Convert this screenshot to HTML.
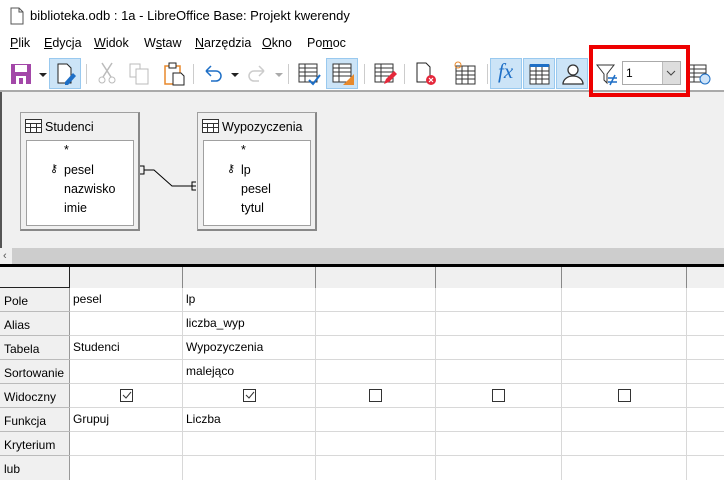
<!DOCTYPE html>
<html><head><meta charset="utf-8"><style>
*{margin:0;padding:0;box-sizing:border-box}
body{width:724px;height:480px;overflow:hidden;background:#fff;font-family:"Liberation Sans",sans-serif;font-size:12px;color:#000;position:relative}
.a{position:absolute}
.menu span{position:absolute;top:36px;font-size:12.5px}
.btn{position:absolute;top:58px;width:32px;height:31px}
.hl{background:#cce4f7;border:1px solid #99c9ef}
.sep{position:absolute;top:64px;width:1px;height:20px;background:#ccc}
.tb{position:absolute;background:#f0f0f0;border:1px solid #a0a0a0;border-right:2px solid #888;border-bottom:2px solid #888}
.tb .hd{position:absolute;left:24px;top:7px;font-size:12.5px}
.tb .ls{position:absolute;left:5px;top:27px;right:4px;bottom:3px;background:#fff;border:1px solid #a0a0a0}
.ls div{position:absolute;left:37px;font-size:12.5px}
.grid .c{position:absolute;font-size:12px}
</style></head><body>
<!-- title -->
<svg class="a" style="left:10px;top:7px" width="14" height="18"><path d="M1 1h8l4 4v12H1z M9 1v4h4" fill="#fff" stroke="#555"/></svg>
<div class="a" style="left:30px;top:8px;font-size:13px">biblioteka.odb : 1a - LibreOffice Base: Projekt kwerendy</div>
<div class="menu">
<span style="left:10px"><u>P</u>lik</span><span style="left:44px"><u>E</u>dycja</span><span style="left:94px"><u>W</u>idok</span><span style="left:144px">W<u>s</u>taw</span><span style="left:195px"><u>N</u>arzędzia</span><span style="left:262px"><u>O</u>kno</span><span style="left:307px">Po<u>m</u>oc</span>
</div>
<!-- toolbar -->
<svg class="a" style="left:10px;top:63px" width="22" height="22"><rect x="1" y="1" width="20" height="20" fill="#a347a8"/><rect x="5" y="2" width="12" height="7" fill="#fff"/><rect x="6" y="13" width="10" height="8" fill="#fff"/><rect x="9" y="15" width="4" height="6" fill="#a347a8"/></svg>
<div class="a" style="left:39px;top:73px;border:4px solid transparent;border-top:4px solid #222"></div>
<div class="btn hl" style="left:49px"></div>
<svg class="a" style="left:56px;top:63px" width="22" height="22"><path d="M2 1h9l4 4v15H2z" fill="#fff" stroke="#222"/><path d="M9 19l8-9 3 3-8 9h-3z" fill="#1e6fc6"/></svg>
<div class="sep" style="left:86px"></div>
<svg class="a" style="left:97px;top:62px" width="20" height="22"><path d="M5 1l9 14M15 1L6 15" stroke="#bbb" stroke-width="1.5" fill="none"/><circle cx="5" cy="18" r="3" fill="none" stroke="#bbb"/><circle cx="15" cy="18" r="3" fill="none" stroke="#bbb"/></svg>
<svg class="a" style="left:129px;top:63px" width="22" height="22"><rect x="1" y="1" width="10" height="13" fill="#fff" stroke="#bbb"/><rect x="7" y="6" width="12" height="15" fill="#fff" stroke="#bbb"/></svg>
<svg class="a" style="left:164px;top:62px" width="22" height="24"><rect x="1" y="4" width="15" height="18" fill="#fff" stroke="#e8892b" stroke-width="1.5"/><rect x="5" y="1" width="7" height="5" fill="#fff" stroke="#222"/><path d="M9 11h8l3 3v9H9z" fill="#fff" stroke="#222"/></svg>
<div class="sep" style="left:193px"></div>
<svg class="a" style="left:202px;top:64px" width="22" height="20"><path d="M4 7h10a5 5 0 010 10H9M4 7l5-5M4 7l5 5" fill="none" stroke="#1e6fc6" stroke-width="1.5"/></svg>
<div class="a" style="left:231px;top:73px;border:4px solid transparent;border-top:4px solid #222"></div>
<svg class="a" style="left:246px;top:64px" width="22" height="20"><path d="M18 7H8a5 5 0 000 10h5M18 7l-5-5M18 7l-5 5" fill="none" stroke="#ccc" stroke-width="1.5"/></svg>
<div class="a" style="left:275px;top:73px;border:4px solid transparent;border-top:4px solid #aaa"></div>
<div class="sep" style="left:288px"></div>
<svg class="a" style="left:298px;top:62px" width="24" height="24"><rect x="1" y="2" width="18" height="18" fill="#fff" stroke="#333"/><path d="M1 6h18M1 10h18M1 14h18M7 2v18" stroke="#333"/><path d="M11 18l4 4 7-9" stroke="#1e6fc6" stroke-width="2" fill="none"/></svg>
<div class="btn hl" style="left:326px"></div>
<svg class="a" style="left:332px;top:62px" width="24" height="24"><rect x="1" y="2" width="18" height="18" fill="#fff" stroke="#333"/><path d="M1 6h18M1 10h18M1 14h18M7 2v18" stroke="#333"/><path d="M22 12v11h-11z" fill="#e8892b"/></svg>
<div class="sep" style="left:364px"></div>
<svg class="a" style="left:374px;top:62px" width="24" height="24"><rect x="1" y="2" width="18" height="18" fill="#fff" stroke="#333"/><path d="M1 6h18M1 10h18M1 14h18M7 2v18" stroke="#333"/><path d="M10 22l2-5 8-8 3 3-8 8z" fill="#e5283b"/></svg>
<div class="sep" style="left:404px"></div>
<svg class="a" style="left:415px;top:62px" width="24" height="24"><path d="M2 1h9l4 4v15H2z" fill="#fff" stroke="#222"/><circle cx="16" cy="18" r="5" fill="#e5283b"/><path d="M14 16l4 4M18 16l-4 4" stroke="#fff" stroke-width="1.2"/></svg>
<svg class="a" style="left:453px;top:60px" width="24" height="26"><rect x="3" y="6" width="19" height="18" fill="#fff" stroke="#333"/><path d="M3 11h19M3 15h19M3 19h19M9 6v18M15 6v18" stroke="#333"/><circle cx="5" cy="5" r="3" fill="none" stroke="#e8892b"/></svg>
<div class="sep" style="left:487px"></div>
<div class="btn hl" style="left:490px"></div>
<div class="a" style="left:498px;top:59px;font-family:'Liberation Serif',serif;font-style:italic;font-size:21px;color:#1e6fc6">fx</div>
<div class="btn hl" style="left:523px"></div>
<svg class="a" style="left:528px;top:62px" width="24" height="24"><rect x="2" y="3" width="19" height="19" fill="#fff" stroke="#333"/><rect x="2" y="2" width="19" height="3" fill="#1e6fc6"/><path d="M2 9h19M2 13h19M2 17h19M8 5v17M14 5v17" stroke="#333"/></svg>
<div class="btn hl" style="left:556px"></div>
<svg class="a" style="left:561px;top:62px" width="24" height="24"><circle cx="12" cy="8" r="5" fill="#fff" stroke="#333" stroke-width="1.3"/><path d="M2 22a10 8 0 0120 0z" fill="#fff" stroke="#333" stroke-width="1.3"/></svg>
<svg class="a" style="left:596px;top:62px" width="24" height="24"><path d="M1 3h17l-7 9v9l-3-3v-6z" fill="#fff" stroke="#333"/><path d="M12 16h9M12 20h9M19 13l-5 10" stroke="#1e6fc6" stroke-width="1.5"/></svg>
<div class="a" style="left:622px;top:61px;width:59px;height:24px;border:1px solid #aaa;background:#fff"></div>
<div class="a" style="left:626px;top:66px;font-size:12px">1</div>
<div class="a" style="left:662px;top:62px;width:18px;height:22px;background:#ddd;border-left:1px solid #bbb"></div>
<svg class="a" style="left:666px;top:70px" width="10" height="6"><path d="M1 1l4 4 4-4" stroke="#444" fill="none"/></svg>
<svg class="a" style="left:688px;top:62px" width="24" height="24"><rect x="1" y="3" width="17" height="17" fill="#fff" stroke="#333"/><path d="M1 7h17M1 11h17M1 15h17M6 3v17" stroke="#333"/><circle cx="17" cy="17" r="5" fill="#cfe4f9" stroke="#1e6fc6"/></svg>
<div class="a" style="left:0;top:90px;width:724px;height:2px;background:#aaa"></div>
<!-- design area -->
<div class="a" style="left:0;top:92px;width:724px;height:156px;background:#f0f0f0;border-left:2px solid #555"></div>
<div class="tb" style="left:20px;top:112px;width:120px;height:119px">
<svg class="a" style="left:4px;top:6px" width="17" height="14"><rect x="0.5" y="0.5" width="16" height="13" fill="#fff" stroke="#333"/><path d="M0 4.5h17M0 8.5h17M5.5 4v10M11.5 4v10" stroke="#333"/></svg>
<div class="hd">Studenci</div>
<div class="ls"><div style="top:2px">*</div><div style="top:22px">pesel</div><div style="top:41px">nazwisko</div><div style="top:60px">imie</div><div style="left:23px;top:21px;font-size:11px">⚷</div></div>
</div>
<div class="tb" style="left:197px;top:112px;width:120px;height:119px">
<svg class="a" style="left:4px;top:6px" width="17" height="14"><rect x="0.5" y="0.5" width="16" height="13" fill="#fff" stroke="#333"/><path d="M0 4.5h17M0 8.5h17M5.5 4v10M11.5 4v10" stroke="#333"/></svg>
<div class="hd">Wypozyczenia</div>
<div class="ls"><div style="top:2px">*</div><div style="top:22px">lp</div><div style="top:41px">pesel</div><div style="top:60px">tytul</div><div style="left:23px;top:21px;font-size:11px">⚷</div></div>
</div>
<svg class="a" style="left:138px;top:164px" width="62" height="30"><path d="M2 2h4v8h-4M6 6h10l18 16h18M58 18h-4v8h4" fill="none" stroke="#000"/><path d="M52 22h6" stroke="#000"/></svg>
<!-- red highlight -->
<div class="a" style="left:589px;top:45px;width:101px;height:52px;border:4px solid #ee0000"></div>
<!-- scrollbar -->
<div class="a" style="left:0;top:248px;width:724px;height:16px;background:#cdcdcd"></div>
<div class="a" style="left:0;top:248px;width:12px;height:16px;background:#f0f0f0;font-size:11px;color:#555;padding-left:3px;line-height:16px">‹</div>
<div class="a" style="left:0;top:264px;width:724px;height:3px;background:#000"></div>
<!-- grid -->
<div class="grid">
<div class="a" style="left:0;top:267px;width:724px;height:21px;background:#f0f0f0"></div>
<div class="a" style="left:0;top:267px;width:70px;height:213px;background:#f0f0f0;border-right:1px solid #999"></div>
<div class="a" style="left:69px;top:267px;width:1px;height:21px;background:#222"></div>
<div class="a" style="left:0;top:287px;width:70px;height:1px;background:#222"></div>
<svg class="a" style="left:0;top:267px" width="724" height="213">
<g stroke="#888"><path d="M182.5 0v21M315.5 0v21M435.5 0v21M561.5 0v21M686.5 0v21"/></g>
<g stroke="#d8d8d8"><path d="M182.5 21v192M315.5 21v192M435.5 21v192M561.5 21v192M686.5 21v192"/>
<path d="M70 44.5h654M70 68.5h654M70 92.5h654M70 116.5h654M70 140.5h654M70 164.5h654M70 188.5h654"/></g>
<g stroke="#bbb"><path d="M0 44.5h70M0 68.5h70M0 92.5h70M0 116.5h70M0 140.5h70M0 164.5h70M0 188.5h70"/></g>
</svg>
<div class="c" style="left:4px;top:294px">Pole</div>
<div class="c" style="left:4px;top:318px">Alias</div>
<div class="c" style="left:4px;top:342px">Tabela</div>
<div class="c" style="left:4px;top:366px">Sortowanie</div>
<div class="c" style="left:4px;top:390px">Widoczny</div>
<div class="c" style="left:4px;top:414px">Funkcja</div>
<div class="c" style="left:4px;top:438px">Kryterium</div>
<div class="c" style="left:4px;top:462px">lub</div>
<div class="c" style="left:73px;top:292px">pesel</div>
<div class="c" style="left:186px;top:292px">lp</div>
<div class="c" style="left:186px;top:316px">liczba_wyp</div>
<div class="c" style="left:73px;top:340px">Studenci</div>
<div class="c" style="left:186px;top:340px">Wypozyczenia</div>
<div class="c" style="left:186px;top:364px">malejąco</div>
<div class="c" style="left:73px;top:412px">Grupuj</div>
<div class="c" style="left:186px;top:412px">Liczba</div>
<svg class="a" style="left:0;top:388px" width="724" height="16">
<g fill="#fff" stroke="#333"><rect x="120.5" y="1.5" width="12" height="12"/><rect x="243.5" y="1.5" width="12" height="12"/><rect x="369.5" y="1.5" width="12" height="12"/><rect x="492.5" y="1.5" width="12" height="12"/><rect x="618.5" y="1.5" width="12" height="12"/></g>
<g fill="none" stroke="#333"><path d="M123 7l3 3 5-6M246 7l3 3 5-6"/></g>
</svg>
</div>
</body></html>
